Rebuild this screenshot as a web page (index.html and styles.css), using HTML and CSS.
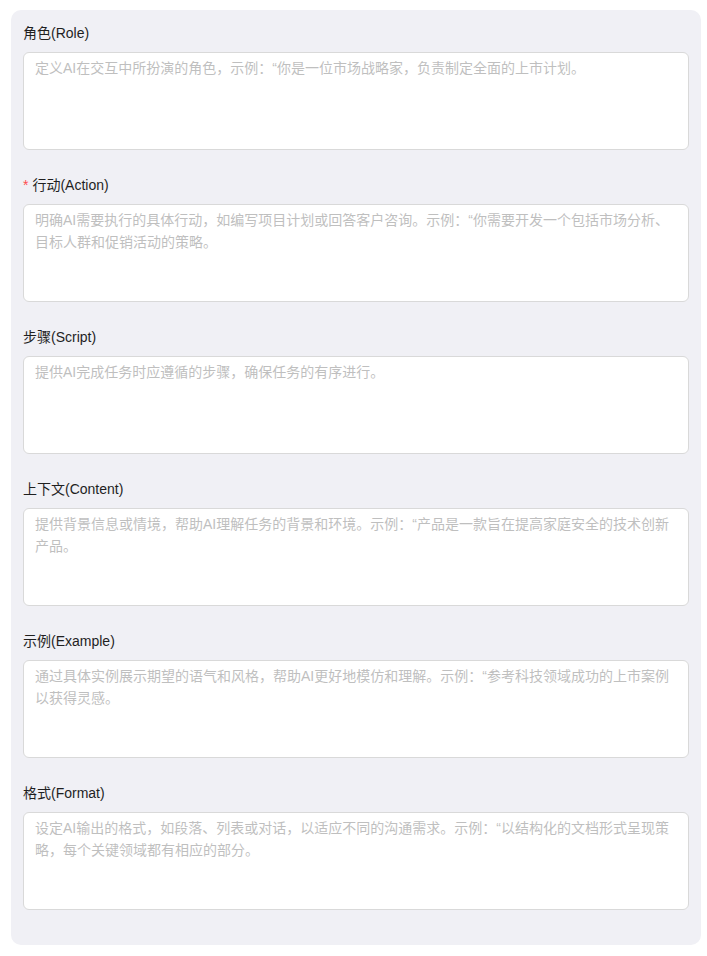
FILE: index.html
```html
<!DOCTYPE html>
<html lang="zh-CN">
<head>
  <meta charset="UTF-8">
  <title>Prompt Form</title>
  <link rel="stylesheet" href="styles.css">
</head>
<body>
  <form class="panel">
    <div class="field">
      <label class="field-label">角色(Role)</label>
      <textarea class="field-input" placeholder="定义AI在交互中所扮演的角色，示例：“你是一位市场战略家，负责制定全面的上市计划。"></textarea>
    </div>
    <div class="field">
      <label class="field-label required">行动(Action)</label>
      <textarea class="field-input" placeholder="明确AI需要执行的具体行动，如编写项目计划或回答客户咨询。示例：“你需要开发一个包括市场分析、目标人群和促销活动的策略。"></textarea>
    </div>
    <div class="field">
      <label class="field-label">步骤(Script)</label>
      <textarea class="field-input" placeholder="提供AI完成任务时应遵循的步骤，确保任务的有序进行。"></textarea>
    </div>
    <div class="field">
      <label class="field-label">上下文(Content)</label>
      <textarea class="field-input" placeholder="提供背景信息或情境，帮助AI理解任务的背景和环境。示例：“产品是一款旨在提高家庭安全的技术创新产品。"></textarea>
    </div>
    <div class="field">
      <label class="field-label">示例(Example)</label>
      <textarea class="field-input" placeholder="通过具体实例展示期望的语气和风格，帮助AI更好地模仿和理解。示例：“参考科技领域成功的上市案例以获得灵感。"></textarea>
    </div>
    <div class="field">
      <label class="field-label">格式(Format)</label>
      <textarea class="field-input" placeholder="设定AI输出的格式，如段落、列表或对话，以适应不同的沟通需求。示例：“以结构化的文档形式呈现策略，每个关键领域都有相应的部分。"></textarea>
    </div>
  </form>
</body>
</html>
```

FILE: styles.css
```css
/* Page */
body {
  margin: 10px 6px 0 11px;
  background-color: #fff;
  font-family: "Liberation Sans", "Noto Sans CJK SC", sans-serif;
  font-size: 14px;
  color: #1f1f1f;
}

.panel {
  background-color: #f0f0f5;
  border-radius: 10px;
  padding: 12px 12px 11px;
}

.field {
  margin-bottom: 24px;
}

.field-label {
  display: block;
  line-height: 22px;
  margin-bottom: 8px;
}

.field-label.required::before {
  content: "*";
  color: #ff4d4f;
  margin-right: 4px;
  font-family: "Liberation Sans", sans-serif;
}

.field-input {
  display: block;
  box-sizing: border-box;
  width: 100%;
  height: 98px;
  padding: 4px 11px;
  border: 1px solid #d9d9d9;
  border-radius: 6px;
  background-color: #fff;
  font-family: inherit;
  font-size: 14px;
  line-height: 22px;
  color: #1f1f1f;
  resize: none;
  outline: none;
}

.field-input::placeholder {
  color: #bfbfbf;
}
```
